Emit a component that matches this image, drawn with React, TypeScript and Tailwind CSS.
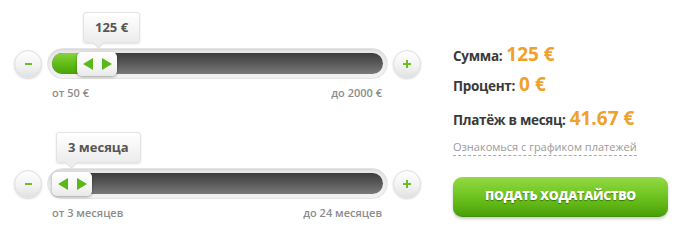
import React from "react";

const FONT = { fontFamily: '"Open Sans", "Noto Sans", sans-serif' };

function RoundBtn({ sign }: { sign: "-" | "+" }) {
  return (
    <div className="w-[28px] h-[28px] rounded-full bg-[linear-gradient(180deg,#ffffff_0%,#f3f3f3_55%,#e2e2e2_100%)] border border-[#dedede] shadow-[0_1px_2px_rgba(0,0,0,0.18)] flex items-center justify-center shrink-0">
      {sign === "-" ? (
        <div className="w-[7px] h-[2px] bg-[#6cbf22]" />
      ) : (
        <div className="relative w-[8px] h-[8px]">
          <div className="absolute left-0 top-[3px] w-[8px] h-[2px] bg-[#6cbf22]" />
          <div className="absolute top-0 left-[3px] w-[2px] h-[8px] bg-[#6cbf22]" />
        </div>
      )}
    </div>
  );
}

function Slider({
  label,
  min,
  max,
  handleLeft,
  tipLeft,
}: {
  label: string;
  min: string;
  max: string;
  handleLeft: number;
  tipLeft: number;
}) {
  return (
    <div className="flex flex-col">
      <div className="relative h-[36px] ml-[33px]">
        <div
          className="absolute top-0 h-[31px] px-[11px] flex items-center rounded-[3px] border border-[#e3e3e3] bg-[linear-gradient(180deg,#ffffff_0%,#f4f4f4_60%,#ececec_100%)] shadow-[0_1px_2px_rgba(0,0,0,0.12)] text-[13px] font-bold text-[#555555] whitespace-nowrap"
          style={{ left: tipLeft }}
        >
          {label}
          <div className="absolute left-[10px] bottom-[-5px] w-[9px] h-[9px] rotate-45 bg-[#ededed] border-r border-b border-[#e0e0e0]" />
        </div>
      </div>
      <div className="flex items-center">
        <RoundBtn sign="-" />
        <div className="ml-[5px] w-[341px] h-[31px] rounded-full bg-[linear-gradient(180deg,#e6e6e6_0%,#f2f2f2_100%)] border border-[#e4e4e4] p-[4px] shadow-[inset_0_1px_2px_rgba(0,0,0,0.08)]">
          <div className="relative h-[21px] rounded-full bg-[linear-gradient(180deg,#3c3c3c_0%,#5a5a5a_50%,#7a7a7a_100%)]">
            <div
              className="absolute left-0 top-0 bottom-0 rounded-l-full bg-[linear-gradient(180deg,#86d43a_0%,#5fbb15_55%,#4aa20a_100%)]"
              style={{ width: handleLeft + 20 }}
            />
            <div
              className="absolute top-[-1px] w-[40px] h-[24px] rounded-[5px] bg-[linear-gradient(180deg,#ffffff_0%,#f6f6f6_60%,#e8e8e8_100%)] shadow-[0_1px_3px_rgba(0,0,0,0.35)] flex items-center"
              style={{ left: handleLeft }}
            >
              <div className="ml-[6px] w-0 h-0 border-t-[6px] border-b-[6px] border-r-[10px] border-t-transparent border-b-transparent border-r-[#5cb81a]" />
              <div className="ml-[9px] w-0 h-0 border-t-[6px] border-b-[6px] border-l-[10px] border-t-transparent border-b-transparent border-l-[#5cb81a]" />
            </div>
          </div>
        </div>
        <div className="ml-[5px]">
          <RoundBtn sign="+" />
        </div>
      </div>
      <div className="flex justify-between ml-[38px] w-[330px] mt-[6px] text-[11px] leading-[15px] font-semibold text-[#8c8c8c]">
        <span>{min}</span>
        <span>{max}</span>
      </div>
    </div>
  );
}

export default function App() {
  return (
    <div className="w-[689px] h-[250px] bg-white flex" style={FONT}>
      <div className="pl-[14px] pt-[12px] w-[453px] shrink-0">
        <Slider label="125 €" min="от 50 €" max="до 2000 €" handleLeft={25} tipLeft={36} />
        <div className="mt-[32px]">
          <Slider label="3 месяца" min="от 3 месяцев" max="до 24 месяцев" handleLeft={0} tipLeft={9} />
        </div>
      </div>
      <div className="pt-[40px] flex flex-col items-start">
        <div className="h-[26px] flex items-baseline gap-[4px] whitespace-nowrap">
          <span className="text-[13.5px] tracking-[-0.3px] font-bold text-[#3a3a3a]">Сумма:</span>
          <span className="text-[19px] font-bold text-[#f0a12b]">125 €</span>
        </div>
        <div className="mt-[4px] h-[26px] flex items-baseline gap-[4px] whitespace-nowrap">
          <span className="text-[13.5px] tracking-[-0.3px] font-bold text-[#3a3a3a]">Процент:</span>
          <span className="text-[19px] font-bold text-[#f0a12b]">0 €</span>
        </div>
        <div className="mt-[8px] h-[26px] flex items-baseline gap-[4px] whitespace-nowrap">
          <span className="text-[13.5px] tracking-[-0.3px] font-bold text-[#3a3a3a]">Платёж в месяц:</span>
          <span className="text-[19px] font-bold text-[#f0a12b]">41.67 €</span>
        </div>
        <div className="mt-[9px] text-[11px] leading-[16px] text-[#9a9a9a] border-b border-dashed border-[#aaaaaa] whitespace-nowrap">
          Ознакомься с графиком платежей
        </div>
        <div className="mt-[21px] w-[215px] h-[40px] rounded-[9px] bg-[linear-gradient(180deg,#93d944_0%,#72c624_45%,#58b010_80%,#4a9e0a_100%)] border-b border-[#43920a] shadow-[0_2px_3px_rgba(0,0,0,0.2)] flex items-center justify-center">
          <span className="text-[12.5px] font-extrabold text-white uppercase tracking-[-0.3px] [text-shadow:0_1px_1px_rgba(40,90,0,0.7)]">
            Подать ходатайство
          </span>
        </div>
      </div>
    </div>
  );
}
